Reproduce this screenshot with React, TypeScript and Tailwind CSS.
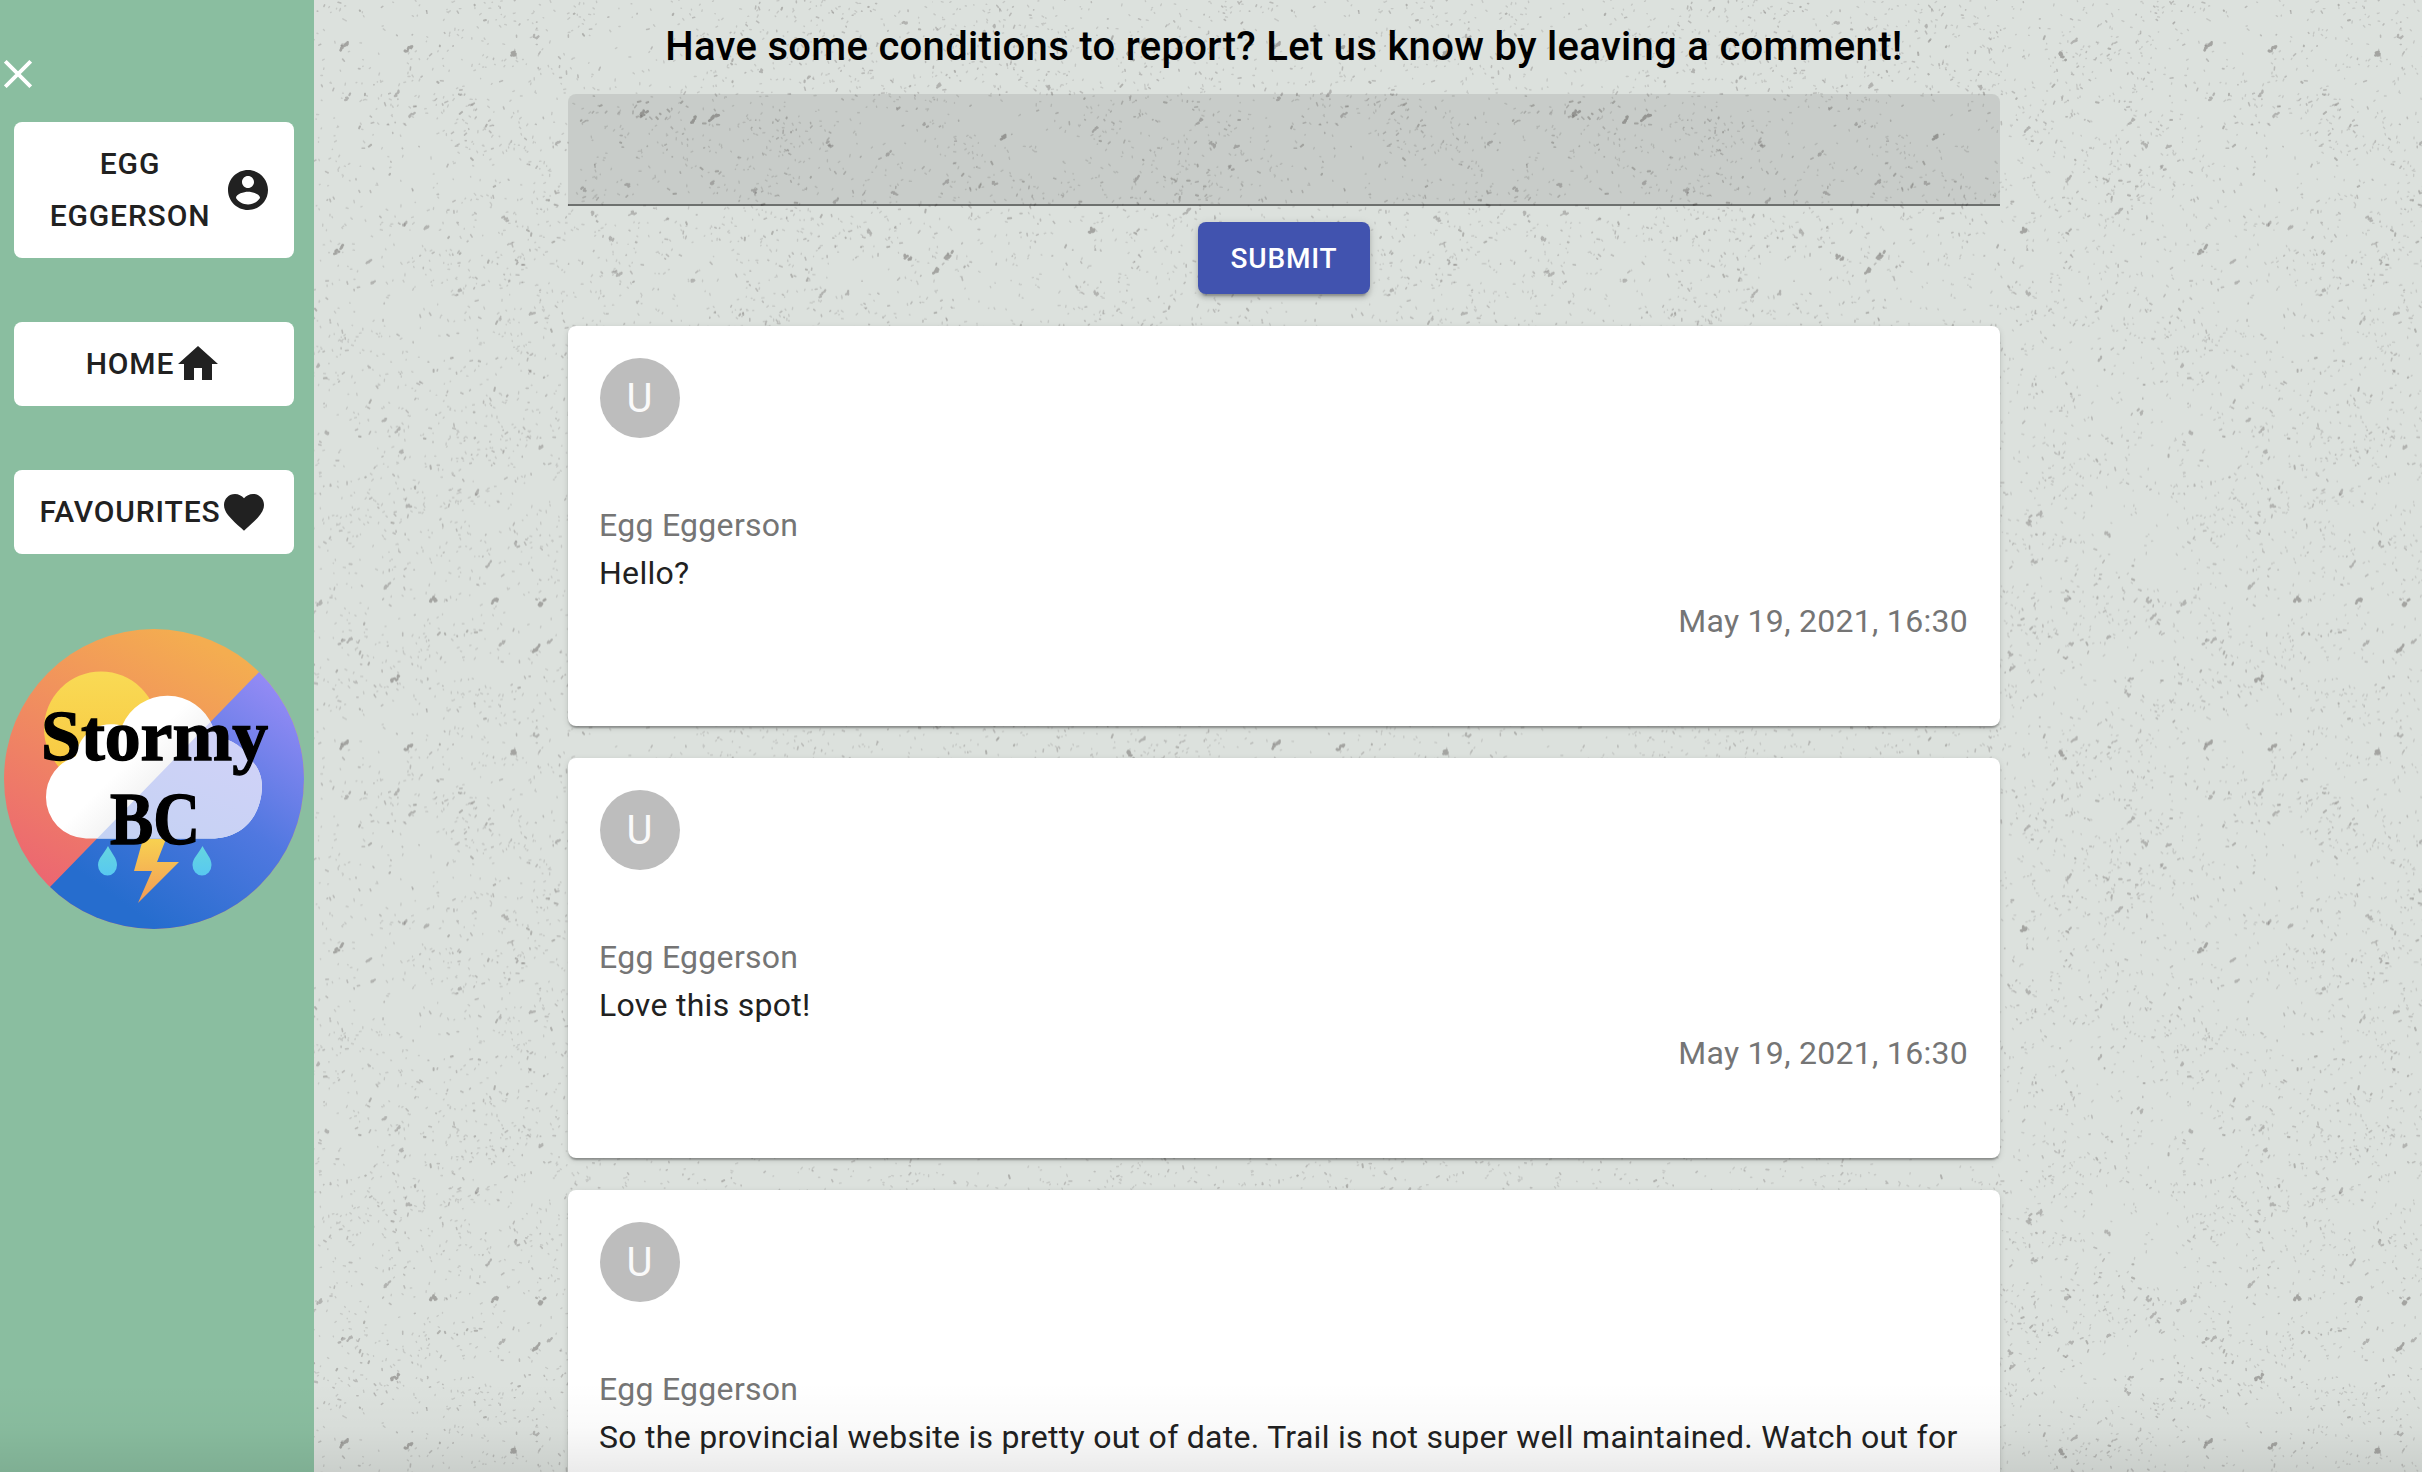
import React from "react";

const TILE_W = 932;
const TILE_H = 698.5;

/** Small deterministic generator so that the paper texture is stable. */
function makeRandom(seed: number) {
  let s = seed;
  const step = () => {
    s = (s * 1664525 + 1013904223) % 4294967296;
    return s / 4294967296;
  };
  step();
  step();
  return step;
}

/** Short strokes scattered over the tile, thinned out in some patches. */
function flecks(seed: number, count: number, min: number, max: number) {
  const rnd = makeRandom(seed);
  let d = "";
  for (let i = 0; i < count; i++) {
    const x = rnd() * TILE_W;
    const y = rnd() * TILE_H;
    const patch = Math.sin(x / 41 + Math.sin(y / 37) * 2) * Math.cos(y / 53 + Math.sin(x / 61));
    const keep = rnd() < 0.68 + patch * 0.32;
    const a = Math.PI * rnd();
    const len = min + rnd() * (max - min);
    if (keep) {
      d += `M${x.toFixed(1)} ${y.toFixed(1)}l${(Math.cos(a) * len).toFixed(1)} ${(-Math.sin(a) * len).toFixed(1)}`;
    }
  }
  return d;
}

const FAINT = flecks(7, 7200, 0.3, 2.2);
const MEDIUM = flecks(21, 1900, 0.3, 3);
const DARK = flecks(43, 330, 0.4, 3.2);

/* Larger chips of the stone texture, as tile coordinates. */
const CHIPS: [number, number][] = [
  [344, 46], [408, 50], [513, 54], [397, 94], [347, 98], [411, 115], [338, 251], [405, 225],
  [427, 228], [504, 219], [558, 142], [532, 314], [317, 367], [535, 38], [459, 292], [373, 282],
  [369, 261], [198, 57], [210, 41], [163, 129], [266, 123], [280, 145], [303, 147], [298, 168],
  [204, 180], [158, 232], [235, 360], [254, 212], [163, 294], [275, 412], [328, 435], [385, 420],
  [397, 430], [400, 452], [539, 449], [478, 492], [243, 534], [164, 523], [175, 515], [515, 544],
  [169, 562], [386, 587], [433, 601], [494, 602], [541, 604], [285, 602], [319, 604], [289, 617],
  [203, 600], [349, 640], [341, 642], [501, 645], [537, 649], [549, 642], [395, 679], [244, 638],
  [145, 654], [147, 669], [267, 679], [263, 694], [488, 565], [408, 507], [208, 646], [644, 113],
  [691, 121], [713, 117], [925, 125], [71, 137], [583, 189], [627, 185], [753, 190], [713, 182],
  [13, 183], [63, 184], [894, 194], [888, 154], [828, 144], [632, 213], [594, 215], [835, 202],
  [611, 240], [613, 273], [619, 275], [694, 282], [868, 232], [908, 259], [16, 256], [4, 271],
  [822, 294], [847, 294], [760, 71], [807, 79], [905, 24], [62, 27], [114, 87], [6, 86],
];

const STRONG = new Set([0, 1, 2, 6, 17, 64, 65, 67, 85, 86, 87, 63, 25, 52, 54, 43, 44, 42]);

function buildChips(strong: boolean) {
  const rnd = makeRandom(strong ? 5 : 11);
  let d = "";
  CHIPS.forEach(([x, y], i) => {
    if (STRONG.has(i) !== strong) return;
    const spread = strong ? 4 : 2.6;
    const n = strong ? 6 : 4;
    const tilt = rnd() < 0.6 ? -1 : 1;
    for (let k = 0; k < n; k++) {
      const u = (rnd() - 0.5) * 2 * spread;
      const v = u * tilt * 0.7 + (rnd() - 0.5) * spread;
      d += `M${(x + u).toFixed(1)} ${(y + v).toFixed(1)}l${(rnd() * 2).toFixed(1)} ${(-rnd() * 2).toFixed(1)}`;
    }
  });
  return d;
}

const STRONG_CHIPS = buildChips(true);
const SOFT_CHIPS = buildChips(false);

function Speckles() {
  return (
    <svg className="absolute inset-0 size-full" aria-hidden="true">
      <defs>
        <pattern id="stone" width={TILE_W} height={TILE_H} patternUnits="userSpaceOnUse" x="-314">
          <g fill="none" strokeLinecap="round">
            <path d={FAINT} stroke="#7a7674" strokeOpacity="0.24" strokeWidth="1.4" />
            <path d={MEDIUM} stroke="#6f6b69" strokeOpacity="0.33" strokeWidth="1.6" />
            <path d={DARK} stroke="#666260" strokeOpacity="0.38" strokeWidth="2" />
            <path d={SOFT_CHIPS} stroke="#666260" strokeOpacity="0.36" strokeWidth="2.2" />
            <path d={STRONG_CHIPS} stroke="#666260" strokeOpacity="0.48" strokeWidth="2.6" />
          </g>
        </pattern>
      </defs>
      <rect width="100%" height="100%" fill="url(#stone)" />
    </svg>
  );
}

function Icon({ d }: { d: string }) {
  return (
    <svg viewBox="0 0 24 24" className="size-12 shrink-0" fill="currentColor">
      <path d={d} />
    </svg>
  );
}

const ACCOUNT =
  "M12 2C6.48 2 2 6.48 2 12s4.48 10 10 10 10-4.48 10-10S17.52 2 12 2zm0 3c1.66 0 3 1.34 3 3s-1.34 3-3 3-3-1.34-3-3 1.34-3 3-3zm0 14.2c-2.5 0-4.71-1.28-6-3.22.03-1.99 4-3.08 6-3.08 1.99 0 5.97 1.09 6 3.08-1.29 1.94-3.5 3.22-6 3.22z";
const HOME = "M10 20v-6h4v6h5v-8h3L12 3 2 12h3v8z";
const HEART =
  "M12 21.35l-1.45-1.32C5.4 15.36 2 12.28 2 8.5 2 5.42 4.42 3 7.5 3c1.74 0 3.41.81 4.5 2.09C13.09 3.81 14.76 3 16.5 3 19.58 3 22 5.42 22 8.5c0 3.78-3.4 6.86-8.55 11.54L12 21.35z";

function NavButton({ label, icon, wrap = false }: { label: string; icon: string; wrap?: boolean }) {
  return (
    <button className="flex w-[280px] items-center justify-center rounded-lg bg-white px-[22px] py-4 text-[30px] leading-[52px] font-medium tracking-[0.02857em] text-[#212121] uppercase">
      <span className={wrap ? "flex-1 text-center" : ""}>{label}</span>
      <Icon d={icon} />
    </button>
  );
}

const CLOUD =
  "M82 209.500A41 41 0 0 1 42 168A43 43 0 0 1 72 127A35 35 0 0 1 118 97A49 49 0 0 1 209 98C213 104 214 108 214 108A49 49 0 0 1 247 131C256 140 258 150 258 158C257 188 238 209.500 207 209.500z";
const DROP = "c4 8 9 12 9 19a9.500 10.500 0 0 1-19 0c0-7 6-11 10-19z";

function Logo() {
  return (
    <svg viewBox="0 0 300 300" className="ml-1 size-[300px]">
      <defs>
        <linearGradient id="warm" x1="0.2" y1="1" x2="0.7" y2="0">
          <stop offset="0.1" stopColor="#ec6771" />
          <stop offset="0.95" stopColor="#f4ad50" />
        </linearGradient>
        <linearGradient id="cool" x1="0.3" y1="0.95" x2="0.9" y2="0.1">
          <stop offset="0.1" stopColor="#266dce" />
          <stop offset="0.5" stopColor="#5078e0" />
          <stop offset="1" stopColor="#a58ffa" />
        </linearGradient>
        <linearGradient id="sun" x1="0" y1="0" x2="0" y2="1">
          <stop offset="0" stopColor="#f9da55" />
          <stop offset="1" stopColor="#f8c63e" />
        </linearGradient>
        <linearGradient id="bolt" x1="0" y1="0" x2="0" y2="1">
          <stop offset="0" stopColor="#f8d150" />
          <stop offset="1" stopColor="#f29a58" />
        </linearGradient>
        <linearGradient id="haze" x1="0" y1="1" x2="0.7" y2="0">
          <stop offset="0" stopColor="#c2d2f3" />
          <stop offset="1" stopColor="#d2d2f8" />
        </linearGradient>
        <linearGradient id="drop" x1="0" y1="0" x2="0" y2="1">
          <stop offset="0" stopColor="#65d6e0" />
          <stop offset="1" stopColor="#58c8f0" />
        </linearGradient>
        <linearGradient id="shade" gradientUnits="userSpaceOnUse" x1="128" y1="128" x2="154" y2="154">
          <stop offset="0" stopColor="#fff" />
          <stop offset="1" stopColor="#f3f3f3" />
        </linearGradient>
        <clipPath id="disc">
          <circle cx="150" cy="150" r="150" />
        </clipPath>
        <clipPath id="lower">
          <path d="M46 258L255 43L310 -14V310H-6z" />
        </clipPath>
      </defs>
      <circle cx="150" cy="150" r="150" fill="url(#warm)" />
      <g clipPath="url(#disc)">
        <path d="M46 258L255 43L310 -14V310H-6z" fill="url(#cool)" />
      </g>
      <circle cx="97" cy="99.500" r="57" fill="url(#sun)" />
      <path d={CLOUD} fill="url(#shade)" />
      <g clipPath="url(#lower)">
        <path d={CLOUD} fill="url(#haze)" />
      </g>
      <path d="M139 210h23l-9 23h22l-41 41l14-32h-18z" fill="url(#bolt)" />
      <path d={`M104 217${DROP}`} fill="url(#drop)" />
      <path d={`M198.500 217${DROP}`} fill="url(#drop)" />
      <g fontFamily="'Liberation Serif', serif" fontWeight="700" fontSize="72" stroke="#000" strokeWidth="1.4">
        <text x="37" y="131" textLength="227" lengthAdjust="spacingAndGlyphs">
          Stormy
        </text>
        <text x="106" y="215" fontSize="75" textLength="90" lengthAdjust="spacingAndGlyphs">
          BC
        </text>
      </g>
    </svg>
  );
}

const comments = [
  { name: "Egg Eggerson", text: "Hello?", date: "May 19, 2021, 16:30" },
  { name: "Egg Eggerson", text: "Love this spot!", date: "May 19, 2021, 16:30" },
  {
    name: "Egg Eggerson",
    text: "So the provincial website is pretty out of date. Trail is not super well maintained. Watch out for",
    date: "",
  },
];

function CommentCard({ name, text, date }: { name: string; text: string; date: string }) {
  return (
    <article className="h-[400px] shrink-0 rounded-lg bg-white p-8 shadow-[0_4px_2px_-2px_rgba(0,0,0,0.2),0_2px_2px_rgba(0,0,0,0.14),0_2px_6px_rgba(0,0,0,0.12)]">
      <div className="flex size-20 items-center justify-center rounded-full bg-[#bdbdbd] pt-0.5 pr-px text-[40px] leading-none text-[#fafafa]">
        U
      </div>
      <div className="mt-[63px] -ml-px text-[32px] leading-[48px] tracking-[0.29px]">
        <p className="text-[#757575]">{name}</p>
        <p className="whitespace-nowrap text-[#212121]">{text}</p>
        <p className="text-right text-[#757575]">{date}</p>
      </div>
    </article>
  );
}

export default function App() {
  return (
    <div className="relative flex h-[1472px] w-[2422px] overflow-hidden bg-[#dce1dd] font-[Roboto,sans-serif]">
      <aside className="flex w-[314px] shrink-0 flex-col bg-[#8abea0] pt-[60px]">
        <svg viewBox="0 0 28 28" className="ml-1 size-7 shrink-0" stroke="#fff" strokeWidth="3.8">
          <path d="M1.300 1.300L26.700 26.700M26.700 1.300L1.300 26.700" />
        </svg>
        <nav className="mt-[34px] ml-[14px] flex flex-col gap-16">
          <NavButton label="Egg Eggerson" icon={ACCOUNT} wrap />
          <NavButton label="Home" icon={HOME} />
          <NavButton label="Favourites" icon={HEART} />
        </nav>
        <div className="mt-[75px]">
          <Logo />
        </div>
      </aside>
      <main className="relative flex-1">
        <Speckles />
        <section className="relative ml-[254px] flex w-[1432px] flex-col">
          <h1 className="mt-[15px] text-center text-[40px] leading-[64px] font-medium tracking-[0.0075em] text-black">
            Have some conditions to report? Let us know by leaving a comment!
          </h1>
          <textarea className="mt-[15px] block h-28 resize-none rounded-t-lg border-b-2 border-black/45 bg-black/9 p-6 text-[32px] outline-none" />
          <button className="mt-4 h-[72px] w-[172px] self-center rounded-lg bg-[#4153af] text-[28px] leading-[49px] font-medium tracking-[0.02857em] text-white shadow-[0_6px_2px_-4px_rgba(0,0,0,0.2),0_4px_4px_rgba(0,0,0,0.14),0_2px_10px_rgba(0,0,0,0.12)]">
            SUBMIT
          </button>
          <div className="mt-8 flex flex-col gap-8">
            {comments.map((c, i) => (
              <CommentCard key={i} {...c} />
            ))}
          </div>
        </section>
      </main>
      <div className="pointer-events-none absolute inset-x-0 bottom-0 h-[90px] bg-linear-to-b from-black/0 via-black/2 to-black/8" />
    </div>
  );
}
